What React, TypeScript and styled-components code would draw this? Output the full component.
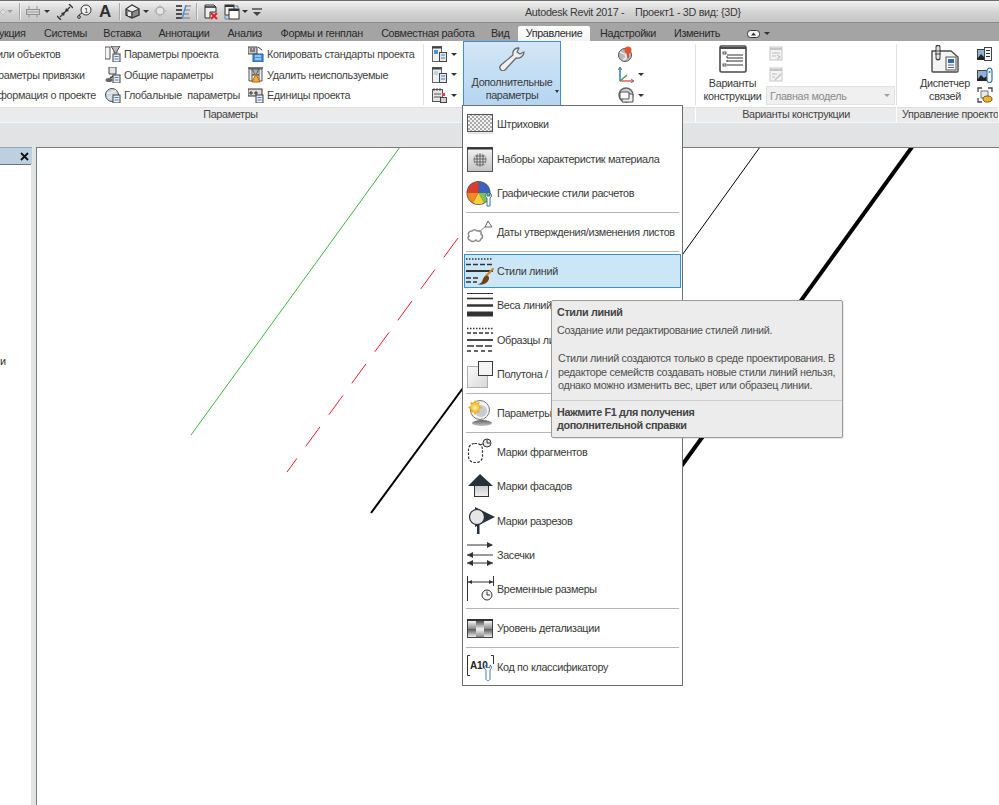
import React from "react";
import styled, { createGlobalStyle } from "styled-components";

const Global = createGlobalStyle`
  html, body { margin: 0; padding: 0; background: #fff; }
  * { box-sizing: border-box; }
`;

const Root = styled.div`
  position: relative;
  width: 999px;
  height: 805px;
  overflow: hidden;
  display: flex;
  flex-direction: column;
  font-family: "Liberation Sans", "Noto Sans", sans-serif;
  font-size: 10.8px;
  letter-spacing: -0.33px;
  color: #3c3c3c;
`;

const TitleBar = styled.div`
  height: 23px;
  flex: none;
  display: flex;
  align-items: center;
  border-top: 1px solid #6e6e6e;
  background: linear-gradient(#f1f1f1, #d2d2d2 55%, #c6c6c6);
  border-bottom: 1px solid #8c8c8c;
  position: relative;
`;

const Qat = styled.div`
  display: flex;
  align-items: center;
  height: 100%;
  width: 526px;
  flex: none;
  margin-left: -1px;
`;

const QatGap = styled.span<{ $w: number }>`
  width: ${(p) => p.$w}px;
  flex: none;
`;

const QatSep = styled.span`
  width: 1px;
  height: 17px;
  background: #a8a8a8;
  box-shadow: 1px 0 0 #eee;
  flex: none;
`;

const Arrow = styled.span<{ $light?: boolean }>`
  width: 0;
  height: 0;
  flex: none;
  border-left: 3px solid transparent;
  border-right: 3px solid transparent;
  border-top: 3px solid ${(p) => (p.$light ? "#a0a0a0" : "#333")};
`;

const BigA = styled.span`
  font-weight: 700;
  font-size: 17px;
  line-height: 1;
  color: #2f2f2f;
  width: 14px;
  flex: none;
  text-align: center;
`;

const AppTitle = styled.div`
  color: #3a3a3a;
  white-space: pre;
`;

const TabBar = styled.div`
  height: 18px;
  flex: none;
  display: flex;
  align-items: flex-end;
  background: #a4a4a4;
  margin-left: -43.5px;
`;

const Tab = styled.div<{ $active?: boolean; $w: number }>`
  width: ${(p) => p.$w}px;
  flex: none;
  height: 15px;
  line-height: 14px;
  text-align: center;
  white-space: nowrap;
  color: #2a2a2a;
  background: ${(p) => (p.$active ? "linear-gradient(#fdfdfd, #f4f4f4)" : "transparent")};
  border-radius: 2px 2px 0 0;
`;

const TabTool = styled.div`
  display: flex;
  align-items: center;
  gap: 3px;
  height: 15px;
  margin-left: 19px;
`;

const Ribbon = styled.div`
  height: 81px;
  flex: none;
  display: flex;
  background: #fff;
`;

const Panel = styled.div<{ $w: number }>`
  width: ${(p) => p.$w}px;
  flex: none;
  display: flex;
  flex-direction: column;
`;

const PanelBody = styled.div`
  height: 66px;
  flex: none;
  display: flex;
  overflow: hidden;
  position: relative;
`;

const PanelTitle = styled.div<{ $pad?: number; $left?: boolean }>`
  height: 15px;
  flex: none;
  background: #ebebeb;
  border-top: 1px solid #dedede;
  margin-right: 1px;
  line-height: 13px;
  color: #444;
  white-space: nowrap;
  overflow: hidden;
  text-align: ${(p) => (p.$left ? "left" : "center")};
  padding-right: ${(p) => p.$pad ?? 0}px;
  padding-left: ${(p) => (p.$left ? 5 : 0)}px;
`;

const ColList = styled.div<{ $w: number; $shift?: number }>`
  width: ${(p) => p.$w}px;
  flex: none;
  display: flex;
  flex-direction: column;
  padding-top: 3px;
  margin-left: ${(p) => p.$shift ?? 0}px;
`;

const Row = styled.div`
  height: 20.6px;
  display: flex;
  align-items: center;
  gap: 3px;
  white-space: pre;
  color: #3f3f3f;
`;

const PanelRule = styled.div`
  width: 1px;
  margin: 3px 0 2px;
  background: #e2e2e2;
  flex: none;
`;

const SmallCol = styled.div<{ $w: number; $pad: number }>`
  width: ${(p) => p.$w}px;
  flex: none;
  display: flex;
  flex-direction: column;
  padding: 3px 0 0 ${(p) => p.$pad}px;
`;

const SmallRow = styled.div`
  height: 20.6px;
  display: flex;
  align-items: center;
  gap: 4px;
`;

const BigButton = styled.div`
  width: 98px;
  height: 65px;
  flex: none;
  display: flex;
  flex-direction: column;
  align-items: center;
  background: linear-gradient(#d3e6f6, #b5d5f1);
  border: 1px solid #3b8fd6;
  position: relative;
  padding-top: 5px;
  gap: 5px;
`;

const BigLabel = styled.div`
  text-align: center;
  line-height: 13px;
  white-space: nowrap;
  color: #3a3a3a;
`;

const BigTool = styled.div<{ $w: number; $ml?: number }>`
  width: ${(p) => p.$w}px;
  margin-left: ${(p) => p.$ml ?? 0}px;
  flex: none;
  display: flex;
  flex-direction: column;
  align-items: center;
  padding-top: 4px;
  gap: 4px;
`;

const ButtonCaret = styled.span`
  position: absolute;
  right: 1px;
  bottom: 12px;
  width: 0;
  height: 0;
  border-left: 2.5px solid transparent;
  border-right: 2.5px solid transparent;
  border-top: 3px solid #333;
`;

const Combo = styled.div`
  height: 19px;
  width: 129px;
  margin-left: -3px;
  margin-top: 1px;
  background: #f0f0f0;
  border: 1px solid #e2e2e2;
  color: #8a8a8a;
  display: flex;
  align-items: center;
  justify-content: space-between;
  padding: 0 4px 0 3px;
  white-space: nowrap;
`;

const Band = styled.div`
  height: 25px;
  flex: none;
  background: #e2e3e4;
  border-top: 1px solid #f4f4f4;
`;

const Main = styled.div`
  flex: 1;
  display: flex;
  min-height: 0;
  background: #e2e3e4;
`;

const Browser = styled.div`
  width: 32px;
  flex: none;
  display: flex;
  flex-direction: column;
`;

const BrowserHead = styled.div`
  height: 17px;
  flex: none;
  background: #bdd0e0;
  border-top: 1px solid #9aa7b3;
  display: flex;
  align-items: center;
  justify-content: flex-end;
  padding-right: 3px;
`;

const BrowserBody = styled.div`
  flex: 1;
  background: #fff;
  border-top: 1px solid #6f6f6f;
  margin-right: 1px;
  padding-top: 189px;
  display: flex;
  flex-direction: column;
  align-items: flex-start;
`;

const BrowserText = styled.span`
  line-height: 14px;
  color: #333;
`;

const Canvas = styled.div`
  margin-left: 4px;
  flex: 1;
  background: #fff;
  border-left: 1px solid #7a7a7a;
  border-top: 1px solid #7a7a7a;
  position: relative;
`;

const Drawing = styled.svg`
  display: block;
  width: 100%;
  height: 100%;
`;

const Menu = styled.div`
  position: absolute;
  left: 462px;
  top: 105px;
  width: 221px;
  height: 581px;
  background: #fff;
  border: 1px solid #6f6f6f;
  padding-top: 1px;
  display: flex;
  flex-direction: column;
`;

const Item = styled.div<{ $active?: boolean }>`
  height: 34.45px;
  flex: none;
  margin: 0 1px;
  display: flex;
  align-items: center;
  gap: 2px;
  border: 1px solid ${(p) => (p.$active ? "#3792dc" : "transparent")};
  background: ${(p) => (p.$active ? "#cbe6f7" : "transparent")};
  white-space: nowrap;
  color: #3a3a3a;
`;

const ItemIcon = styled.svg`
  width: 30px;
  height: 30px;
  flex: none;
`;

const MenuSep = styled.div`
  height: 1px;
  flex: none;
  margin: 1.7px 3px;
  background: #b4b4b4;
`;

const Tip = styled.div`
  position: absolute;
  left: 551px;
  top: 300px;
  width: 292px;
  height: 138px;
  background: #ececec;
  border: 1px solid #9b9b9b;
  border-radius: 2px;
  box-shadow: 1px 1px 1px rgba(0, 0, 0, 0.1);
  display: flex;
  flex-direction: column;
  color: #505050;
  line-height: 13.5px;
  white-space: nowrap;
`;

const TipTitle = styled.div`
  font-weight: 700;
  letter-spacing: -0.37px;
  padding: 5px 0 0 5px;
  color: #444;
`;

const TipText = styled.div`
  padding: 4px 0 0 5px;
`;

const TipLong = styled.div`
  padding: 15px 0 0 6px;
`;

const TipHelp = styled.div`
  margin-top: 7px;
  border-top: 1px solid #cfcfcf;
  padding: 5px 0 0 5px;
  font-weight: 700;
  letter-spacing: -0.37px;
  color: #444;
`;

const Svg = ({ w = 16, h = 16, children }: { w?: number; h?: number; children: React.ReactNode }) => (
  <svg width={w} height={h} viewBox={`0 0 ${w} ${h}`} style={{ flex: "none", display: "block" }}>
    {children}
  </svg>
);

/* quick access icons */
const FadedDot = () => (
  <Svg w={8} h={10}>
    <path d="M1 5l3-3 3 3-3 3z" fill="#ddd" stroke="#bbb" />
  </Svg>
);
const AlignIcon = () => (
  <Svg w={14} h={14}>
    <rect x="0.500" y="4.500" width="13" height="5" fill="#d8d8d8" stroke="#8f8f8f" />
    <path d="M0 7h14M3 1v3M11 1v3M3 10v3M11 10v3" stroke="#9a9a9a" />
  </Svg>
);
const DimIcon = () => (
  <Svg w={16} h={16}>
    <path d="M3 13L13 3" stroke="#333" strokeWidth="1.200" />
    <path d="M0 12l4 4M12 0l4 4" stroke="#333" strokeWidth="1.400" />
    <path d="M4 9l3 3 1-4zM12 7L9 4 8 8z" fill="#333" />
  </Svg>
);
const TagIcon = () => (
  <Svg w={15} h={15}>
    <circle cx="9" cy="6" r="5" fill="#f2f2f2" stroke="#333" />
    <text x="9" y="9" fontSize="8" textAnchor="middle" fill="#333" fontFamily="Liberation Sans">1</text>
    <path d="M5 9L2 11v1" fill="none" stroke="#333" />
    <circle cx="2" cy="13" r="1.400" fill="none" stroke="#333" />
  </Svg>
);
const HouseIcon = () => (
  <Svg w={15} h={15}>
    <path d="M1 5l6-4 7 4v6l-7 3-6-3z" fill="#8c8c8c" stroke="#333" strokeWidth="1.300" />
    <path d="M1 5l6-4 7 4-7 3z" fill="#eee" stroke="#333" />
    <path d="M7 8v6" stroke="#333" />
    <rect x="3" y="8" width="3" height="4" fill="#e8e8e8" />
  </Svg>
);
const DiamondIcon = () => (
  <Svg w={13} h={13}>
    <circle cx="6" cy="6" r="4" fill="#e6e6e6" stroke="#aaa" strokeWidth="1.400" />
    <path d="M0 6h2M10 6h3M6 0v2M6 10v3" stroke="#bbb" />
  </Svg>
);
const SectionIcon = () => (
  <Svg w={15} h={14}>
    <path d="M0 1h6M0 5h6M0 9h6M0 13h6" stroke="#222" strokeWidth="1.600" />
    <path d="M9 1h6M9 5h5M7 9h6M7 13h7" stroke="#777" strokeWidth="1.200" />
    <path d="M10 0L6 14" stroke="#3a8fe0" strokeWidth="1.400" />
  </Svg>
);
const CloseWinIcon = () => (
  <Svg w={16} h={16}>
    <path d="M2 1h9l2 2v5H7v6H2z" fill="#eee" stroke="#333" />
    <path d="M2 3h11" stroke="#333" strokeWidth="1.600" />
    <path d="M8 9l6 6M14 9l-6 6" stroke="#d22" strokeWidth="2" />
  </Svg>
);
const SwitchWinIcon = () => (
  <Svg w={16} h={16}>
    <rect x="1" y="1" width="9" height="10" fill="#f2f2f2" stroke="#333" />
    <rect x="5" y="5" width="10" height="10" fill="#fff" stroke="#333" />
    <path d="M1 2h9M5 6h10" stroke="#333" strokeWidth="2" />
    <path d="M11 2h3v2" fill="none" stroke="#4a8bd0" />
    <path d="M1 12v3h3" fill="none" stroke="#4a8bd0" />
  </Svg>
);
const CustomizeIcon = () => (
  <Svg w={10} h={10}>
    <path d="M0 2h10" stroke="#444" strokeWidth="1.400" />
    <path d="M1 5h8L5 9z" fill="#444" />
  </Svg>
);

/* ribbon icons */
const ParamDoc = ({ extra }: { extra: React.ReactNode }) => (
  <Svg w={16} h={16}>
    {extra}
    <rect x="8" y="8" width="7" height="8" fill="#e9eef3" stroke="#3f3f3f" />
    <path d="M9.500 10.500h4M9.500 13h4" stroke="#4a7fb5" />
  </Svg>
);
const ProjParamsIcon = () => (
  <ParamDoc
    extra={
      <>
        <path d="M0 1h5v12H0z" fill="#f3f3f3" stroke="#555" />
        <path d="M6 0h9l-3 5v2H9V5z" fill="#bbb" stroke="#444" />
      </>
    }
  />
);
const SharedParamsIcon = () => (
  <ParamDoc
    extra={
      <>
        <path d="M4 0h7v7H4z" fill="#dfe6ee" stroke="#444" />
        <ellipse cx="4" cy="13" rx="3.500" ry="2" fill="#666" />
        <path d="M5 11l4-2" stroke="#444" strokeWidth="1.400" />
      </>
    }
  />
);
const GlobalParamsIcon = () => (
  <ParamDoc
    extra={
      <>
        <circle cx="7" cy="8" r="6.500" fill="#cfd8df" stroke="#4d4d4d" />
        <path d="M2 6c3 1 7-1 9-3M3 11c2-1 3-1 4-3" fill="none" stroke="#f7f7f7" />
      </>
    }
  />
);
const CopyStdIcon = () => (
  <Svg w={16} h={16}>
    <rect x="0" y="1" width="9" height="7" fill="#c8c8c8" stroke="#444" />
    <path d="M2 3h2M5 3h2M2 5h5" stroke="#333" />
    <path d="M5 8h10v8H5z" fill="#4a92d8" stroke="#1f5a96" />
    <path d="M7 10h6M7 13h6" stroke="#e8f2fb" />
    <path d="M10 1l4 3" stroke="#444" />
  </Svg>
);
const PurgeIcon = () => (
  <Svg w={16} h={16}>
    <path d="M0 1h15" stroke="#555" strokeWidth="1.600" />
    <path d="M1 2h3v12H1zM11 2h3v12h-3z" fill="#eee" stroke="#555" />
    <path d="M4 2h7L8.500 7 11 8H4l2.500-1z" fill="#aaa" stroke="#555" />
    <path d="M8 7l4 8H4z" fill="#f2b02c" stroke="#9a6a10" />
  </Svg>
);
const UnitsIcon = () => (
  <Svg w={16} h={16}>
    <rect x="0" y="2" width="14" height="7" fill="#dcdcdc" stroke="#333" />
    <path d="M2 5h2v2H2zM7 5h2v2H7z" fill="none" stroke="#333" />
    <rect x="8" y="8" width="7" height="8" fill="#e9eef3" stroke="#3f3f3f" />
    <path d="M9.500 10.500h4M9.500 13h4" stroke="#4a7fb5" />
  </Svg>
);
const SheetIcon = ({ tone }: { tone: string }) => (
  <Svg w={15} h={16}>
    <rect x="0.500" y="0.500" width="9" height="15" fill="#f0f0f0" stroke="#666" />
    <path d="M0 1.500h10" stroke="#444" strokeWidth="2" />
    <rect x="2" y="4" width="4" height="4" fill={tone} />
    <rect x="7.500" y="6.500" width="7" height="9" fill="#dfe6ee" stroke="#444" />
    <path d="M9 9h4M9 12h4" stroke="#4a7fb5" />
  </Svg>
);
const CalIcon = () => (
  <Svg w={15} h={16}>
    <rect x="0.500" y="2.500" width="10" height="12" fill="#e4e4e4" stroke="#555" />
    <path d="M2 1v3M5 1v3M8 1v3M2 7h7M2 10h7" stroke="#555" />
    <rect x="8.500" y="10.500" width="6" height="5" fill="#cfd5da" stroke="#444" />
    <path d="M10 6h3v3h-3z" fill="#d8434f" />
  </Svg>
);
const WrenchIcon = () => (
  <svg width="26" height="24" viewBox="0 0 26 24" style={{ display: "block" }}>
    <path
      d="M19 1c-3 0-6 3-5 7l-12 10c-2 2-1 4 0 5s3 1 4 0L17 11c4 1 8-2 8-6l-4 2-3-2 2-4z"
      fill="#eef1f3"
      stroke="#6a6a6a"
      strokeWidth="1.300"
      strokeLinejoin="round"
    />
  </svg>
);
const GlobeIcon = () => (
  <Svg w={16} h={16}>
    <circle cx="7" cy="9" r="6.500" fill="#b9b9b9" stroke="#555" />
    <path d="M2 6c3 2 5 1 6 4s-2 3-3 4" fill="none" stroke="#eee" strokeWidth="1.500" />
    <circle cx="10" cy="4" r="3.500" fill="#e2562c" />
    <path d="M10 7v5" stroke="#c0431e" strokeWidth="1.500" />
  </Svg>
);
const AxisIcon = () => (
  <Svg w={16} h={16}>
    <path d="M2 1v13" stroke="#2a78cc" strokeWidth="1.500" />
    <path d="M2 14h13" stroke="#d9352a" strokeWidth="1.200" />
    <path d="M2 14l7-6" stroke="#39a845" strokeWidth="1.500" />
    <path d="M0 3l2-3 2 3M13 12l3 2-3 2" fill="none" stroke="#555" strokeWidth="0.800" />
  </Svg>
);
const CameraIcon = () => (
  <Svg w={16} h={16}>
    <circle cx="8" cy="8" r="7" fill="#cfcfcf" stroke="#666" strokeWidth="1.400" />
    <rect x="4" y="7" width="11" height="8" rx="1" fill="#f2f2f2" stroke="#555" strokeWidth="1.100" />
    <rect x="2" y="5" width="9" height="7" rx="1" fill="#fafafa" stroke="#555" strokeWidth="1.100" />
  </Svg>
);
const VariantsIcon = () => (
  <svg width="28" height="28" viewBox="0 0 28 28" style={{ display: "block" }}>
    <rect x="1" y="1" width="26" height="26" rx="1.500" fill="#fff" stroke="#4a4a4a" strokeWidth="1.600" />
    <path d="M1 3h26" stroke="#4a4a4a" strokeWidth="2" />
    <rect x="4" y="7" width="3" height="2" fill="#fff" stroke="#333" strokeWidth="0.800" />
    <rect x="4" y="19" width="3" height="2" fill="#fff" stroke="#333" strokeWidth="0.800" />
    <path d="M8 10h16M8 13h16M8 16h16M8 20h16" stroke="#333" />
    <path d="M8 11v2M8 15v2" stroke="#333" />
  </svg>
);
const FadedDocIcon = ({ mark }: { mark: string }) => (
  <Svg w={15} h={16}>
    <rect x="1" y="1" width="12" height="13" fill="#f3f3f3" stroke="#c6c6c6" />
    <path d="M1 3h12" stroke="#c6c6c6" strokeWidth="2" />
    <path d={mark} fill="none" stroke="#bdbdbd" strokeWidth="1.200" />
  </Svg>
);
const LinksIcon = () => (
  <svg width="28" height="28" viewBox="0 0 28 28" style={{ display: "block" }}>
    <path d="M1 6h19l7 6v14a1 1 0 0 1-1 1H2a1 1 0 0 1-1-1z" fill="#f4f4f4" stroke="#4a4a4a" strokeWidth="1.400" />
    <rect x="15" y="12" width="10" height="13" fill="#f7f7f7" stroke="#555" />
    <rect x="17" y="14" width="6" height="4" fill="#2f6aa8" />
    <path d="M17 20h6M17 22.500h6" stroke="#666" />
    <path d="M7 2v11" stroke="#444" strokeWidth="5" strokeLinecap="round" />
    <path d="M7 2.500v10" stroke="#e2e2e2" strokeWidth="3" strokeLinecap="round" />
    <path d="M4 6h6M4 9h6" stroke="#444" />
  </svg>
);
const ManageSmall = ({ variant }: { variant: number }) => (
  <Svg w={16} h={16}>
    {variant === 2 ? (
      <>
        <path d="M1 5V1h4M11 1h4v4M1 11v4h4" fill="none" stroke="#444" strokeWidth="1.300" />
        <rect x="4" y="4" width="7" height="7" fill="#e9e9e9" stroke="#777" />
        <ellipse cx="10.500" cy="12" rx="4.500" ry="3" fill="#f0b431" stroke="#6b5310" />
      </>
    ) : (
      <>
        <rect x="0.500" y="3.500" width="10" height="10" fill="#8fb2d4" stroke="#444" />
        <path d="M0 13l4-5 3 3 3-2v5H0z" fill="#222" />
        {variant === 0 ? (
          <>
            <rect x="7.500" y="1.500" width="7" height="13" fill="#f3f6f9" stroke="#444" />
            <path d="M9 4.500h4M9 7.500h4M9 10.500h4" stroke="#333" />
          </>
        ) : (
          <>
            <path d="M12 1a3 3 0 0 1 3 3v9a2.500 2.500 0 0 1-5 0V4a3 3 0 0 1 2-3z" fill="#fff" stroke="#2d6fb0" strokeWidth="1.200" />
            <circle cx="12.500" cy="5" r="1" fill="#2d6fb0" />
          </>
        )}
      </>
    )}
  </Svg>
);

/* dropdown icons, 30x30 box */
const HatchIcon = () => (
  <ItemIcon viewBox="0 0 30 30">
    <defs>
      <pattern id="hatchP" width="4" height="4" patternUnits="userSpaceOnUse">
        <path d="M0 0L4 4M4 0L0 4" stroke="#8a8a8a" strokeWidth="0.700" />
      </pattern>
    </defs>
    <rect x="2.500" y="5.500" width="25" height="17" fill="#f2f2f2" />
    <rect x="2.500" y="5.500" width="25" height="17" fill="url(#hatchP)" stroke="#555" />
    <path d="M3 24h25" stroke="#ccc" />
  </ItemIcon>
);
const MaterialIcon = () => (
  <ItemIcon viewBox="0 0 30 30">
    <defs>
      <linearGradient id="matG" x1="0" y1="0" x2="0" y2="1">
        <stop offset="0" stopColor="#f4f4f4" />
        <stop offset="1" stopColor="#c4c4c4" />
      </linearGradient>
      <pattern id="matP" width="3" height="3" patternUnits="userSpaceOnUse">
        <circle cx="1.500" cy="1.500" r="1" fill="#d8d8d8" />
      </pattern>
    </defs>
    <rect x="2.500" y="3.500" width="25" height="24" fill="url(#matG)" stroke="#555" />
    <path d="M2 4.500h26" stroke="#333" strokeWidth="2" />
    <circle cx="15" cy="16" r="6.500" fill="#777" />
    <circle cx="15" cy="16" r="6.500" fill="url(#matP)" />
  </ItemIcon>
);
const PieIcon = () => (
  <ItemIcon viewBox="0 0 30 30">
    <circle cx="13.500" cy="15" r="12" fill="#555" />
    <path d="M13.500 15V3.800A11.200 11.200 0 0 1 24.700 15z" fill="#3a62c0" />
    <path d="M13.500 15h11.200A11.200 11.200 0 0 1 19 24.800z" fill="#7dc54a" />
    <path d="M13.500 15l5.500 9.800A11.200 11.200 0 0 1 8 24.800z" fill="#f4cf3e" />
    <path d="M13.500 15L8 24.800A11.200 11.200 0 0 1 2.300 15z" fill="#ef8a24" />
    <path d="M13.500 15H2.300A11.200 11.200 0 0 1 13.500 3.800z" fill="#d9402a" />
    <path d="M22 20c-2-1-2-4 0-5v3h3v-3c2 1 2 4 0 5v8h-3z" fill="#fff" stroke="#3f6d99" />
  </ItemIcon>
);
const CloudIcon = () => (
  <ItemIcon viewBox="0 0 30 30">
    <path
      d="M7 14c2-2 4-1 5 0 3-1 5 1 4 3 2 1 2 4 0 5-1 3-4 3-5 1-2 2-5 2-6 0-2 0-3-3-1-4-2-2 0-5 3-5z"
      fill="#fff"
      stroke="#8a8a8a"
      strokeWidth="1.500"
    />
    <path d="M14 15l7-6" stroke="#8a8a8a" />
    <path d="M23 4l4 6h-7z" fill="#fff" stroke="#666" />
  </ItemIcon>
);
const LineStylesIcon = () => (
  <ItemIcon viewBox="0 0 30 30">
    <path d="M1 3h27" stroke="#333" strokeWidth="1.500" strokeDasharray="1.500 1.500" />
    <path d="M1 8.500h27" stroke="#333" strokeWidth="1.500" strokeDasharray="5 2" />
    <path d="M1 15h27" stroke="#333" strokeWidth="2" />
    <path d="M1 22h14" stroke="#333" strokeWidth="1.500" strokeDasharray="5 2" />
    <path d="M1 26h11" stroke="#333" strokeWidth="1.500" strokeDasharray="5 2" />
    <path d="M21 20L28 13" stroke="#d4802c" strokeWidth="2.200" strokeLinecap="round" />
    <path d="M12 28c4 0 5-2 6-5s3-4 5-3 1 5-2 7-6 2-9 1z" fill="#6e421c" />
  </ItemIcon>
);
const LineWeightsIcon = () => (
  <ItemIcon viewBox="0 0 30 30">
    <path d="M2 3.500h26" stroke="#333" strokeWidth="1" />
    <path d="M2 8.500h26" stroke="#333" strokeWidth="1.600" />
    <path d="M2 15.500h26" stroke="#333" strokeWidth="2.500" />
    <path d="M2 24h26" stroke="#333" strokeWidth="5" />
  </ItemIcon>
);
const LinePatternsIcon = () => (
  <ItemIcon viewBox="0 0 30 30">
    <path d="M2 3.500h26" stroke="#333" strokeWidth="1.500" strokeDasharray="1.500 1.500" />
    <path d="M2 8h26" stroke="#333" strokeWidth="1.500" strokeDasharray="4 2" />
    <path d="M2 15h26" stroke="#333" strokeWidth="1.800" />
    <path d="M2 21h26" stroke="#333" strokeWidth="1.500" strokeDasharray="7 2" />
    <path d="M2 26h26" stroke="#333" strokeWidth="1.500" strokeDasharray="4 3" />
  </ItemIcon>
);
const HalftoneIcon = () => (
  <ItemIcon viewBox="0 0 30 30">
    <defs>
      <linearGradient id="htG" x1="0" y1="0" x2="1" y2="1">
        <stop offset="0" stopColor="#fafafa" />
        <stop offset="1" stopColor="#d8d8d8" />
      </linearGradient>
    </defs>
    <rect x="2.500" y="7.500" width="20" height="21" fill="url(#htG)" stroke="#b0b0b0" />
    <rect x="13.500" y="2.500" width="14" height="14" fill="#f4f4f4" stroke="#3a3a3a" />
  </ItemIcon>
);
const SunIcon = () => (
  <ItemIcon viewBox="0 0 30 30">
    <defs>
      <radialGradient id="sunG">
        <stop offset="0" stopColor="#fff2b0" />
        <stop offset="1" stopColor="#f4bc28" />
      </radialGradient>
      <linearGradient id="shadG" x1="0" y1="0" x2="0" y2="1">
        <stop offset="0" stopColor="#5e5e5e" />
        <stop offset="1" stopColor="#c8c8c8" />
      </linearGradient>
    </defs>
    <circle cx="15" cy="12" r="9.500" fill="#f2f2f2" stroke="#777" />
    <circle cx="16" cy="13" r="6" fill="#c6ccd1" />
    <path d="M10 2l1.500 3 3-1-.5 3.500 3 2-3 2 .5 3.500-3-1L10 17l-1.500-3-3 1 .5-3.500-3-2 3-2L5.500 4l3 1z" fill="#eea81c" />
    <circle cx="10" cy="9.500" r="4.500" fill="url(#sunG)" />
    <ellipse cx="17" cy="25" rx="10" ry="3" fill="url(#shadG)" />
  </ItemIcon>
);
const FragmentIcon = () => (
  <ItemIcon viewBox="0 0 30 30">
    <rect x="3.500" y="6.500" width="14" height="19" rx="6" fill="#fff" stroke="#333" strokeWidth="1.200" strokeDasharray="2.500 1.500" />
    <path d="M15 8l4-1.500" stroke="#333" />
    <circle cx="22" cy="6" r="4" fill="#e8e8e8" stroke="#333" />
    <path d="M22 2.500V6h3" fill="none" stroke="#333" />
  </ItemIcon>
);
const ElevationIcon = () => (
  <ItemIcon viewBox="0 0 30 30">
    <defs>
      <linearGradient id="elvG" x1="0" y1="0" x2="0" y2="1">
        <stop offset="0" stopColor="#c4c4c4" />
        <stop offset="1" stopColor="#f2f2f2" />
      </linearGradient>
    </defs>
    <rect x="9.500" y="13.500" width="14" height="12" fill="url(#elvG)" stroke="#333" />
    <path d="M15 3l13 12H3z" fill="#27313b" />
  </ItemIcon>
);
const SectionMarkIcon = () => (
  <ItemIcon viewBox="0 0 30 30">
    <path d="M10 1l20 10-20 10z" fill="#27313b" />
    <path d="M12 18h2.500v10H12z" fill="#27313b" />
    <circle cx="12" cy="11" r="7.500" fill="#e6e6e6" stroke="#27313b" strokeWidth="1.200" />
  </ItemIcon>
);
const TicksIcon = () => (
  <ItemIcon viewBox="0 0 30 30">
    <path d="M2 5h25" stroke="#333" />
    <path d="M22 2l6 3-6 3z" fill="#333" />
    <path d="M2 15h26" stroke="#333" />
    <path d="M8 12l-6 3 6 3z" fill="#333" />
    <path d="M2 23h26" stroke="#333" />
    <path d="M8 20l-6 3 6 3zM22 20l6 3-6 3z" fill="#333" />
  </ItemIcon>
);
const TempDimIcon = () => (
  <ItemIcon viewBox="0 0 30 30">
    <path d="M2.500 2v25M28.500 2v10" stroke="#333" />
    <path d="M3 8h25" stroke="#333" />
    <path d="M3 8l4-2v4zM28 8l-4-2v4z" fill="#333" />
    <circle cx="22" cy="21" r="5" fill="#f4f4f4" stroke="#333" />
    <path d="M22 17.500V21h3" fill="none" stroke="#333" />
  </ItemIcon>
);
const DetailIcon = () => (
  <ItemIcon viewBox="0 0 30 30">
    <defs>
      <linearGradient id="dtA" x1="0" y1="0" x2="0" y2="1">
        <stop offset="0" stopColor="#555" />
        <stop offset="1" stopColor="#eee" />
      </linearGradient>
      <linearGradient id="dtB" x1="0" y1="0" x2="0" y2="1">
        <stop offset="0" stopColor="#f4f4f4" />
        <stop offset="1" stopColor="#888" />
      </linearGradient>
    </defs>
    <rect x="2.500" y="6.500" width="25" height="18" fill="#ddd" stroke="#444" />
    <path d="M2 7h26" stroke="#333" strokeWidth="2" />
    <rect x="3" y="8" width="8" height="8" fill="url(#dtB)" />
    <rect x="11" y="8" width="8" height="8" fill="url(#dtA)" />
    <rect x="19" y="8" width="8" height="8" fill="url(#dtB)" />
    <rect x="3" y="16" width="8" height="8" fill="url(#dtA)" />
    <rect x="11" y="16" width="8" height="8" fill="url(#dtB)" />
    <rect x="19" y="16" width="8" height="8" fill="url(#dtA)" />
  </ItemIcon>
);
const CodeIcon = () => (
  <ItemIcon viewBox="0 0 30 30">
    <path d="M5 3.500H2.500v20H5M26 3.500h2.500V12" fill="none" stroke="#333" />
    <text x="5" y="17" fontSize="10" fontWeight="700" letterSpacing="-0.3" fill="#222" fontFamily="Liberation Sans">A10</text>
    <path d="M21 18c-2-1-2-4 0-5v2.500h4V13c2 1 2 4 0 5v9c0 2-4 2-4 0z" fill="#fff" stroke="#4b7ba8" />
  </ItemIcon>
);

function App() {
  return (
    <Root>
      <Global />
      <TitleBar>
        <Qat>
          <FadedDot />
          <Arrow $light />
          <QatGap $w={6} />
          <QatSep />
          <QatGap $w={6} />
          <AlignIcon />
          <QatGap $w={4} />
          <Arrow />
          <QatGap $w={7} />
          <DimIcon />
          <QatGap $w={4} />
          <TagIcon />
          <QatGap $w={6} />
          <BigA>A</BigA>
          <QatGap $w={7} />
          <QatSep />
          <QatGap $w={5} />
          <HouseIcon />
          <QatGap $w={3} />
          <Arrow />
          <QatGap $w={5} />
          <DiamondIcon />
          <QatGap $w={9} />
          <SectionIcon />
          <QatGap $w={5} />
          <QatSep />
          <QatGap $w={6} />
          <CloseWinIcon />
          <QatGap $w={5} />
          <SwitchWinIcon />
          <QatGap $w={2} />
          <Arrow />
          <QatGap $w={4} />
          <CustomizeIcon />
        </Qat>
        <AppTitle>{"Autodesk Revit 2017 -    Проект1 - 3D вид: {3D}"}</AppTitle>
      </TitleBar>

      <TabBar>
        <Tab $w={79}>Конструкция</Tab>
        <Tab $w={60}>Системы</Tab>
        <Tab $w={53.5}>Вставка</Tab>
        <Tab $w={70}>Аннотации</Tab>
        <Tab $w={51.5}>Анализ</Tab>
        <Tab $w={102.5}>Формы и генплан</Tab>
        <Tab $w={109.5}>Совместная работа</Tab>
        <Tab $w={35.5}>Вид</Tab>
        <Tab $active $w={72}>Управление</Tab>
        <Tab $w={76}>Надстройки</Tab>
        <Tab $w={62}>Изменить</Tab>
        <TabTool>
          <Svg w={14} h={10}>
            <rect x="0.500" y="1.500" width="12" height="7" rx="3" fill="#f4f4f4" stroke="#333" />
            <path d="M4 6.500h5L6.500 3.500z" fill="#333" />
          </Svg>
          <Arrow />
        </TabTool>
      </TabBar>

      <Ribbon>
        <Panel $w={562}>
          <PanelBody>
            <ColList $w={105} $shift={-15}>
              <Row>Стили объектов</Row>
              <Row>Параметры привязки</Row>
              <Row>Информация о проекте</Row>
            </ColList>
            <ColList $w={143} $shift={15}>
              <Row><ProjParamsIcon />Параметры проекта</Row>
              <Row><SharedParamsIcon />Общие параметры</Row>
              <Row><GlobalParamsIcon />{"Глобальные  параметры"}</Row>
            </ColList>
            <ColList $w={175}>
              <Row><CopyStdIcon />Копировать стандарты проекта</Row>
              <Row><PurgeIcon />Удалить неиспользуемые</Row>
              <Row><UnitsIcon />Единицы проекта</Row>
            </ColList>
            <PanelRule />
            <SmallCol $w={39} $pad={8}>
              <SmallRow><SheetIcon tone="#4a92d8" /><Arrow /></SmallRow>
              <SmallRow><SheetIcon tone="#bcd4ea" /><Arrow /></SmallRow>
              <SmallRow><CalIcon /><Arrow /></SmallRow>
            </SmallCol>
            <BigButton>
              <WrenchIcon />
              <BigLabel>Дополнительные<br />параметры</BigLabel>
              <ButtonCaret />
            </BigButton>
          </PanelBody>
          <PanelTitle $pad={100}>Параметры</PanelTitle>
        </Panel>

        <Panel $w={134}>
          <PanelBody>
            <SmallCol $w={133} $pad={56}>
              <SmallRow><GlobeIcon /></SmallRow>
              <SmallRow><AxisIcon /><Arrow /></SmallRow>
              <SmallRow><CameraIcon /><Arrow /></SmallRow>
            </SmallCol>
            <PanelRule />
          </PanelBody>
          <PanelTitle $left>Позиция проекта</PanelTitle>
        </Panel>

        <Panel $w={201}>
          <PanelBody>
            <BigTool $w={73}>
              <VariantsIcon />
              <BigLabel>Варианты<br />конструкции</BigLabel>
            </BigTool>
            <SmallCol $w={127} $pad={0}>
              <SmallRow><FadedDocIcon mark="M3 7h8M3 10l4 0M8 9l3 2-3 2" /></SmallRow>
              <SmallRow><FadedDocIcon mark="M3 7h5M3 10h3M6 13l6-6" /></SmallRow>
              <Combo>
                Главная модель
                <Arrow $light />
              </Combo>
            </SmallCol>
            <PanelRule />
          </PanelBody>
          <PanelTitle>Варианты конструкции</PanelTitle>
        </Panel>

        <Panel $w={102}>
          <PanelBody>
            <BigTool $w={64} $ml={16}>
              <LinksIcon />
              <BigLabel>Диспетчер<br />связей</BigLabel>
            </BigTool>
            <SmallCol $w={22} $pad={0}>
              <SmallRow><ManageSmall variant={0} /></SmallRow>
              <SmallRow><ManageSmall variant={1} /></SmallRow>
              <SmallRow><ManageSmall variant={2} /></SmallRow>
            </SmallCol>
          </PanelBody>
          <PanelTitle $left>Управление проектом</PanelTitle>
        </Panel>
      </Ribbon>

      <Band />

      <Main>
        <Browser>
          <BrowserHead>
            <Svg w={9} h={9}>
              <path d="M1 1l7 7M8 1L1 8" stroke="#111" strokeWidth="1.800" />
            </Svg>
          </BrowserHead>
          <BrowserBody>
            <BrowserText>и</BrowserText>
          </BrowserBody>
        </Browser>
        <Canvas>
          <Drawing viewBox="37 148 962 657" preserveAspectRatio="xMinYMin slice">
            <path d="M400 147L191 435" stroke="#3fb53f" strokeWidth="1" fill="none" />
            <path d="M458 238L287 472" stroke="#e0202a" strokeWidth="1" strokeDasharray="24 15" fill="none" />
            <path d="M463 388L371 513" stroke="#000" strokeWidth="2" fill="none" />
            <path d="M760 147L680 258" stroke="#000" strokeWidth="1" fill="none" />
            <path d="M912 147L680 468" stroke="#000" strokeWidth="4" fill="none" />
          </Drawing>
        </Canvas>
      </Main>

      <Menu>
        <Item><HatchIcon />Штриховки</Item>
        <Item><MaterialIcon />Наборы характеристик материала</Item>
        <Item><PieIcon />Графические стили расчетов</Item>
        <MenuSep />
        <Item><CloudIcon />Даты утверждения/изменения листов</Item>
        <MenuSep />
        <Item $active><LineStylesIcon />Стили линий</Item>
        <Item><LineWeightsIcon />Веса линий</Item>
        <Item><LinePatternsIcon />Образцы линий</Item>
        <Item><HalftoneIcon />Полутона / подложка</Item>
        <MenuSep />
        <Item><SunIcon />Параметры солнца</Item>
        <MenuSep />
        <Item><FragmentIcon />Марки фрагментов</Item>
        <Item><ElevationIcon />Марки фасадов</Item>
        <Item><SectionMarkIcon />Марки разрезов</Item>
        <Item><TicksIcon />Засечки</Item>
        <Item><TempDimIcon />Временные размеры</Item>
        <MenuSep />
        <Item><DetailIcon />Уровень детализации</Item>
        <MenuSep />
        <Item><CodeIcon />Код по классификатору</Item>
      </Menu>

      <Tip>
        <TipTitle>Стили линий</TipTitle>
        <TipText>Создание или редактирование стилей линий.</TipText>
        <TipLong>
          Стили линий создаются только в среде проектирования. В<br />
          редакторе семейств создавать новые стили линий нельзя,<br />
          однако можно изменить вес, цвет или образец линии.
        </TipLong>
        <TipHelp>
          Нажмите F1 для получения<br />
          дополнительной справки
        </TipHelp>
      </Tip>
    </Root>
  );
}

export default App;
